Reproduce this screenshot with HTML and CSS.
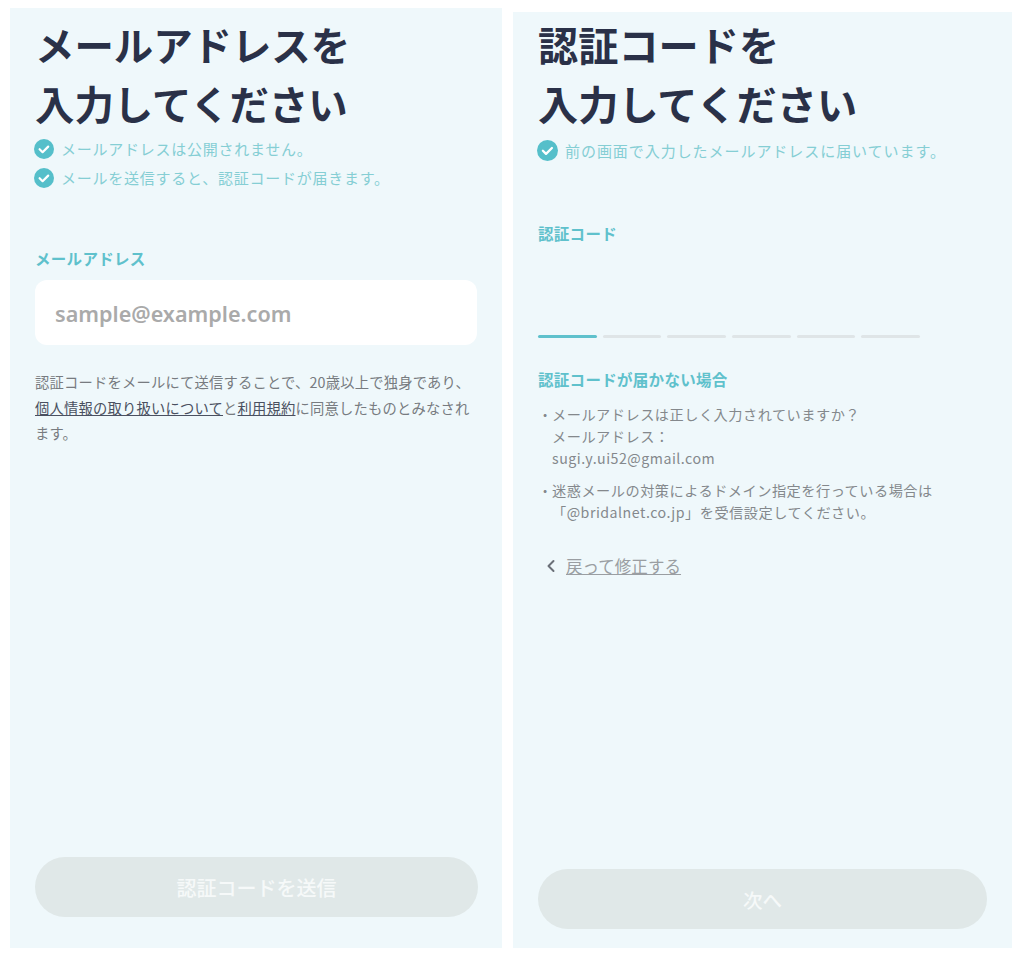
FILE: index.html
```html
<!DOCTYPE html>
<html lang="ja">
<head>
<meta charset="utf-8">
<title>認証</title>
<link rel="stylesheet" href="styles.css">
</head>
<body>
<main class="page">
  <section class="panel panel-email">
    <h1 class="title">メールアドレスを<br>入力してください</h1>
    <ul class="checks">
      <li class="check"><svg class="check-icon" viewBox="0 0 20 20"><circle cx="10" cy="10" r="10" fill="#55bfca"/><path d="M5.6 10.2l3 3 5.6-5.6" fill="none" stroke="#fff" stroke-width="2.2" stroke-linecap="round" stroke-linejoin="round"/></svg>メールアドレスは公開されません。</li>
      <li class="check"><svg class="check-icon" viewBox="0 0 20 20"><circle cx="10" cy="10" r="10" fill="#55bfca"/><path d="M5.6 10.2l3 3 5.6-5.6" fill="none" stroke="#fff" stroke-width="2.2" stroke-linecap="round" stroke-linejoin="round"/></svg>メールを送信すると、認証コードが届きます。</li>
    </ul>
    <h2 class="label label-email">メールアドレス</h2>
    <div class="input">sample@example.com</div>
    <p class="note">認証コードをメールにて送信することで、20歳以上で独身であり、<br><a class="note-link">個人情報の取り扱いについて</a>と<a class="note-link">利用規約</a>に同意したものとみなされ<br>ます。</p>
    <button class="button">認証コードを送信</button>
  </section>
  <section class="panel panel-code">
    <h1 class="title">認証コードを<br>入力してください</h1>
    <ul class="checks">
      <li class="check"><svg class="check-icon" viewBox="0 0 20 20"><circle cx="10" cy="10" r="10" fill="#55bfca"/><path d="M5.6 10.2l3 3 5.6-5.6" fill="none" stroke="#fff" stroke-width="2.2" stroke-linecap="round" stroke-linejoin="round"/></svg>前の画面で入力したメールアドレスに届いています。</li>
    </ul>
    <h2 class="label label-code">認証コード</h2>
    <div class="segments">
      <span class="segment segment-active"></span>
      <span class="segment"></span>
      <span class="segment"></span>
      <span class="segment"></span>
      <span class="segment"></span>
      <span class="segment"></span>
    </div>
    <h2 class="label label-help">認証コードが届かない場合</h2>
    <ul class="help">
      <li class="help-item">メールアドレスは正しく入力されていますか？<br>メールアドレス：<br>sugi.y.ui52@gmail.com</li>
      <li class="help-item">迷惑メールの対策によるドメイン指定を行っている場合は<br>「@bridalnet.co.jp」を受信設定してください。</li>
    </ul>
    <div class="back">
      <svg class="back-icon" viewBox="0 0 10 14"><path d="M7.5 2L2.5 7l5 5" fill="none" stroke="#6b7078" stroke-width="2" stroke-linecap="round" stroke-linejoin="round"/></svg>
      <a class="back-link">戻って修正する</a>
    </div>
    <button class="button button-next">次へ</button>
  </section>
</main>
</body>
</html>
```
FILE: styles.css
```css
* { box-sizing: border-box; }
html, body { margin: 0; padding: 0; background: #fff; }
body {
  width: 1023px;
  height: 960px;
  overflow: hidden;
  font-family: "Noto Sans CJK JP", "Noto Sans", sans-serif;
}
.page {
  display: flex;
  align-items: flex-end;
  gap: 11px;
  padding: 0 11px 12px 10px;
  height: 960px;
}
.panel {
  display: flex;
  flex-direction: column;
  background: #eff8fb;
}
.panel-email {
  width: 492px;
  height: 940px;
  padding: 6px 24px 31px 25px;
}
.panel-code {
  width: 499px;
  height: 936px;
  padding: 2px 25px 19px 25px;
}
.title {
  margin: 0 0 2px;
  font-size: 39.4px;
  line-height: 59px;
  font-weight: 700;
  color: #2a3148;
}
.panel-code .title {
  margin-bottom: 4px;
  font-size: 40.2px;
}
.checks {
  list-style: none;
  margin: 0;
  padding: 0;
}
.check {
  display: flex;
  align-items: center;
  gap: 7px;
  height: 29px;
  margin-left: -1px;
  font-size: 15px;
  letter-spacing: .75px;
  color: #85ced4;
  white-space: nowrap;
}
.panel-code .check { letter-spacing: .95px; }
.check-icon {
  width: 20px;
  height: 20px;
  flex: none;
}
.panel-code .check-icon { width: 21px; height: 21px; }
.label {
  margin: 0;
  font-size: 15.5px;
  line-height: 22px;
  font-weight: 700;
  letter-spacing: .3px;
  color: #5fc1cc;
}
.label-email { margin-top: 55px; }
.label-code { margin-top: 57px; }
.label-help { margin-top: 30px; }
.input {
  height: 65px;
  width: 442px;
  margin-top: 11px;
  padding: 1px 0 0 20px;
  display: flex;
  align-items: center;
  background: #fff;
  border-radius: 12px;
  font-family: "Noto Sans", sans-serif;
  font-size: 21.6px;
  font-weight: 600;
  letter-spacing: 0;
  color: #aaaaaa;
}
.note {
  margin: 24px 0 0;
  font-size: 14.3px;
  line-height: 25.5px;
  letter-spacing: .2px;
  color: #777b80;
  white-space: nowrap;
}
.note-link {
  color: #4a5060;
  text-decoration: underline;
}
.button {
  margin-top: auto;
  height: 60px;
  width: 443px;
  border: 0;
  border-radius: 30px;
  background: #e0e8e8;
  color: #f6f9f9;
  font-family: inherit;
  font-size: 20px;
  font-weight: 500;
}
.button-next {
  width: 449px;
  font-size: 19.5px;
}
.segments {
  display: flex;
  gap: 6px;
  margin-top: 91px;
}
.segment {
  width: 58.7px;
  height: 3px;
  background: #dfe5e7;
  border-radius: 2px;
}
.segment-active { background: #5fc1cc; }
.help {
  list-style: none;
  margin: 13px 0 0;
  padding: 0 0 0 14px;
  font-size: 14.2px;
  line-height: 22px;
  letter-spacing: .5px;
  color: #84888c;
}
.help-item {
  position: relative;
  margin-bottom: 10px;
}
.help-item::before {
  content: "・";
  position: absolute;
  left: -14px;
}
.back {
  display: flex;
  align-items: center;
  gap: 10px;
  margin-top: 21px;
  padding-left: 8px;
}
.back-icon { width: 10px; height: 14px; }
.back-link {
  font-size: 16.5px;
  line-height: 24px;
  letter-spacing: .05px;
  color: #9a9ea2;
  text-decoration: underline;
}
```
